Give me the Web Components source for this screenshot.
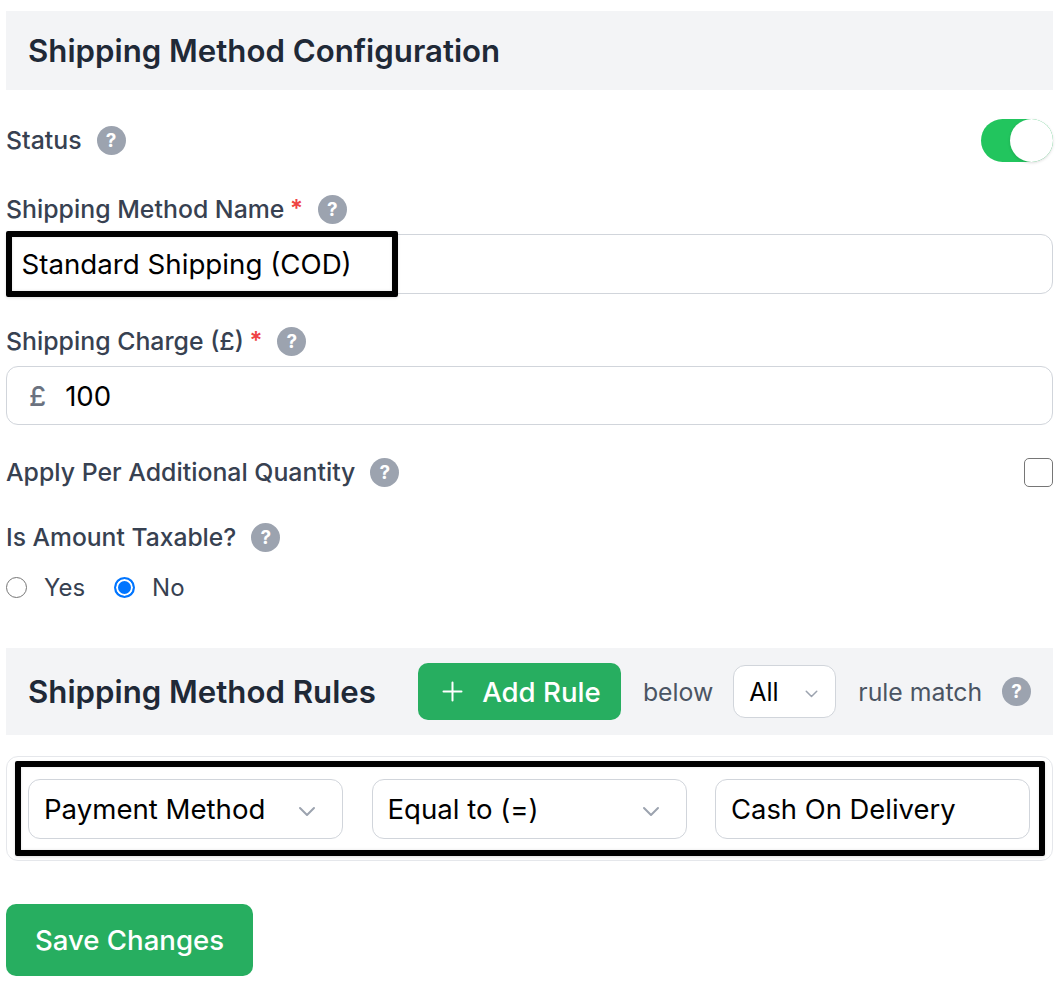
<!DOCTYPE html>
<html lang="en">
<head>
<meta charset="utf-8">
<title>Shipping Method</title>
<style>
  html, body { margin: 0; background: #fff; }
  body { font-family: Inter, "Liberation Sans", sans-serif; }
</style>
</head>
<body>
<shipping-form></shipping-form>

<script>
const FONT = 'Inter, "Liberation Sans", sans-serif';

class HelpIcon extends HTMLElement {
  constructor() {
    super();
    this.attachShadow({ mode: "open" });
    this.shadowRoot.innerHTML = `
    <style>
      :host { display: inline-flex; width: 29px; height: 29px; flex: none; border-radius: 50%; background: #9ca3af;
        color: #fff; align-items: center; justify-content: center; font: 700 19px ${FONT}; }
    </style>
    <span>?</span>`;
  }
}
customElements.define("help-icon", HelpIcon);

class FieldLabel extends HTMLElement {
  constructor() {
    super();
    this.attachShadow({ mode: "open" });
    this.shadowRoot.innerHTML = `
    <style>
      :host { display: flex; align-items: center; height: 29px; color: #374151;
        font: 500 24.85px ${FONT}; white-space: nowrap; }
      .t { padding-bottom: 2px; }
      .req { color: #ef4444; margin-left: 5.5px; padding-bottom: 2px; font-size: 24px; font-weight: 600; }
      help-icon { margin-left: var(--help-gap, 15px); }
    </style>
    <span class="t"><slot></slot></span><span class="req" hidden>*</span><help-icon></help-icon>`;
  }
  connectedCallback() {
    if (this.hasAttribute("required")) {
      this.shadowRoot.querySelector(".req").hidden = false;
    }
  }
}
customElements.define("field-label", FieldLabel);

class PanelHead extends HTMLElement {
  constructor() {
    super();
    this.attachShadow({ mode: "open" });
    this.shadowRoot.innerHTML = `
    <style>
      :host { display: flex; align-items: center; background: #f3f4f6; padding: 0 22px; }
      h2 { margin: 0; color: #1f2937; font: 600 31.2px ${FONT}; white-space: nowrap; }
      .extra { display: flex; align-items: center; flex: 1; }
    </style>
    <h2><slot name="title"></slot></h2><div class="extra"><slot></slot></div>`;
  }
}
customElements.define("panel-head", PanelHead);

class TextBox extends HTMLElement {
  constructor() {
    super();
    this.attachShadow({ mode: "open" });
    this.shadowRoot.innerHTML = `
    <style>
      :host { display: flex; align-items: center; box-sizing: border-box; height: 60px; padding: 0 15px;
        border: 1px solid #d1d5db; border-radius: 12px; background: #fff; color: #000;
        font: 400 27.6px ${FONT}; white-space: nowrap; }
      ::slotted([slot=prefix]) { color: #6b7280; margin: 0 19px 0 7px; font-weight: 500; }
    </style>
    <slot name="prefix"></slot><slot></slot>`;
  }
}
customElements.define("text-box", TextBox);

class SelectBox extends HTMLElement {
  constructor() {
    super();
    this.attachShadow({ mode: "open" });
    this.shadowRoot.innerHTML = `
    <style>
      :host { display: flex; align-items: center; justify-content: space-between; box-sizing: border-box; height: 60px;
        padding: 0 25px 0 15px; border: 1px solid #d1d5db; border-radius: 12px; background: #fff; color: #000;
        font: 400 27.6px ${FONT}; white-space: nowrap; }
      svg { width: var(--chev, 20px); height: var(--chev, 20px); flex: none; margin-top: 3px; }
    </style>
    <span><slot></slot></span>
    <svg viewBox="0 0 20 20" fill="none" stroke="#9ca3af" stroke-width="2" stroke-linecap="round" stroke-linejoin="round"><path d="M3 7l7 7 7-7"/></svg>`;
  }
}
customElements.define("select-box", SelectBox);

class ToggleSwitch extends HTMLElement {
  constructor() {
    super();
    this.attachShadow({ mode: "open" });
    this.shadowRoot.innerHTML = `
    <style>
      :host { display: block; position: relative; width: 72px; height: 43px; border-radius: 22px; background: #22c55e; }
      i { position: absolute; right: 0; top: 0; width: 43px; height: 43px; border-radius: 50%; background: #fff;
        box-shadow: 0 1px 3px rgba(0,0,0,.15); }
    </style>
    <i></i>`;
  }
}
customElements.define("toggle-switch", ToggleSwitch);

class RadioOption extends HTMLElement {
  constructor() {
    super();
    this.attachShadow({ mode: "open" });
    this.shadowRoot.innerHTML = `
    <style>
      :host { display: inline-flex; align-items: center; color: #374151; font: 400 24px ${FONT}; }
      i { width: 21px; height: 21px; box-sizing: border-box; border: 1.5px solid #767676; border-radius: 50%; margin-right: 17px; background: #fff; }
      :host([checked]) i { border: 2px solid #0075ff; box-shadow: inset 0 0 0 2px #fff; background: #0075ff; }
    </style>
    <i></i><slot></slot>`;
  }
}
customElements.define("radio-option", RadioOption);

class GreenButton extends HTMLElement {
  constructor() {
    super();
    this.attachShadow({ mode: "open" });
    this.shadowRoot.innerHTML = `
    <style>
      :host { display: inline-flex; align-items: center; justify-content: center; box-sizing: border-box; background: #27ae60;
        color: #fff; border-radius: 10px; font: 500 27.6px ${FONT}; white-space: nowrap; }
    </style>
    <slot></slot>`;
  }
}
customElements.define("green-button", GreenButton);

// recuadro negro de la captura, va encima del contenido
class MarkBox extends HTMLElement {
  constructor() {
    super();
    this.attachShadow({ mode: "open" });
    this.shadowRoot.innerHTML = `
    <style>
      :host { display: block; position: absolute; box-sizing: border-box; border: 6px solid #000; border-radius: 2px;
        pointer-events: none; box-shadow: inset 0 0 3px rgba(0,0,0,.12), 0 1px 3px rgba(0,0,0,.12); }
    </style>`;
  }
}
customElements.define("mark-box", MarkBox);

class ShippingForm extends HTMLElement {
  constructor() {
    super();
    this.attachShadow({ mode: "open" });
    this.shadowRoot.innerHTML = `
    <style>
      :host { display: block; padding: 11px 9px 12px 6px; font-family: ${FONT}; }
      .head1 { height: 79px; }
      .row { display: flex; align-items: center; justify-content: space-between; }
      .status { margin-top: 29px; height: 43px; }
      .name { margin-top: 33px; }
      .stack { position: relative; margin-top: 10px; }
      .std { font-size: 27.7px; padding-left: 14.5px; }
      .charge { margin-top: 33px; }
      .amount { height: 59px; }
      .per { margin-top: 33px; }
      .check { width: 29px; height: 29px; box-sizing: border-box; border: 1.5px solid #767676; border-radius: 5px; background: #fff; }
      .taxable { margin-top: 36px; font-size: 24.65px; }
      .radios { display: flex; align-items: center; gap: 29px; margin-top: 21px; height: 29px; }
      .head2 { height: 87px; margin-top: 46px; }
      .extra { display: flex; align-items: center; margin-left: 42px; flex: 1; color: #4b5563; font: 400 24.8px ${FONT}; white-space: nowrap; }
      .add { flex: none; width: 203px; height: 57px; gap: 19px; padding-left: 4px; }
      .add svg { width: 21px; height: 21px; }
      .below { margin-left: 22px; }
      .all { flex: none; width: 103px; height: 53px; margin-left: 20px; padding-right: 16px; font-size: 25px; --chev: 15px; }
      .match { margin-left: 22px; }
      .extra help-icon { margin-left: 20px; }
      .rule { position: relative; display: grid; grid-template-columns: repeat(3, 315px); gap: 28.5px; box-sizing: border-box;
        height: 105px; margin-top: 21px; padding: 22px 21px; border: 1px solid #e5e7eb; border-radius: 12px; }
      .cash { font-size: 27.4px; }
      .mark1 { left: 0; top: -3px; width: 392px; height: 66px; }
      .mark2 { left: 8px; top: 4px; right: 7px; bottom: 4px; }
      .save { display: flex; width: 247px; height: 72px; margin-top: 43px; }
    </style>
    <panel-head class="head1"><span slot="title">Shipping Method Configuration</span></panel-head>

    <div class="row status">
      <field-label>Status</field-label>
      <toggle-switch></toggle-switch>
    </div>

    <field-label class="name" required>Shipping Method Name</field-label>
    <div class="stack">
      <text-box class="std">Standard Shipping (COD)</text-box>
      <mark-box class="mark1"></mark-box>
    </div>

    <field-label class="charge" required>Shipping Charge (£)</field-label>
    <div class="stack">
      <text-box class="amount"><span slot="prefix">£</span>100</text-box>
    </div>

    <div class="row per">
      <field-label>Apply Per Additional Quantity</field-label>
      <div class="check"></div>
    </div>

    <field-label class="taxable">Is Amount Taxable?</field-label>
    <div class="radios">
      <radio-option>Yes</radio-option>
      <radio-option checked>No</radio-option>
    </div>

    <panel-head class="head2">
      <span slot="title">Shipping Method Rules</span>
      <div class="extra">
        <green-button class="add">
          <svg viewBox="0 0 21 21" fill="none" stroke="#fff" stroke-width="2" stroke-linecap="round"><path d="M10.5 1.5v18M1.5 10.5h18"/></svg><span>Add Rule</span>
        </green-button>
        <span class="below">below</span>
        <select-box class="all">All</select-box>
        <span class="match">rule match</span>
        <help-icon></help-icon>
      </div>
    </panel-head>

    <div class="rule">
      <select-box>Payment Method</select-box>
      <select-box>Equal to (=)</select-box>
      <text-box class="cash">Cash On Delivery</text-box>
      <mark-box class="mark2"></mark-box>
    </div>

    <green-button class="save">Save Changes</green-button>`;
  }
}
customElements.define("shipping-form", ShippingForm);
</script>
</body>
</html>
